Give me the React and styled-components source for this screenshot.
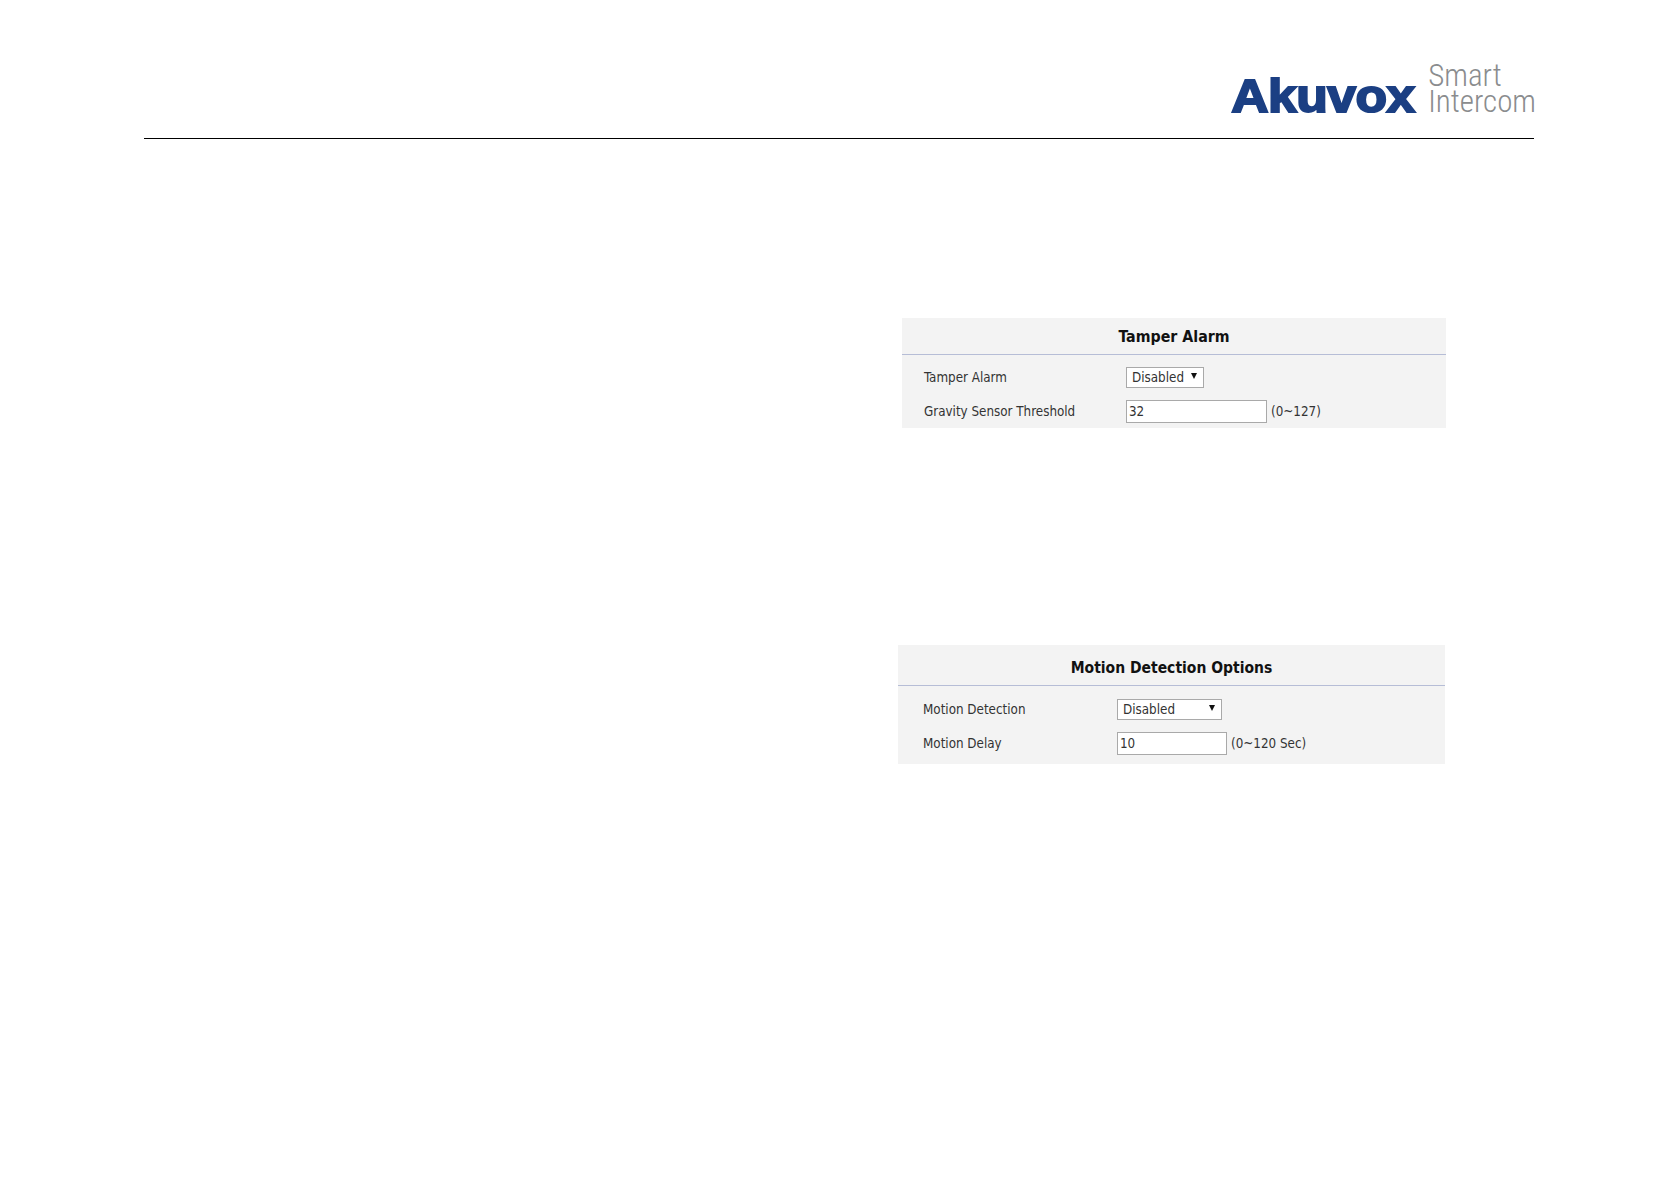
import styled, { createGlobalStyle } from "styled-components";

const GlobalStyle = createGlobalStyle`
  html, body {
    margin: 0;
    padding: 0;
    background: #fff;
  }
  body {
    font-family: "DejaVu Sans", "Liberation Sans", sans-serif;
    font-stretch: condensed;
  }
`;

const Page = styled.div`
  width: 1678px;
  height: 1185px;
  overflow: hidden;
  padding: 60px 0 0 144px;
  box-sizing: border-box;
`;
const Header = styled.header`
  width: 1390px;
  height: 78px;
  border-bottom: 1px solid #000;
  display: flex;
  justify-content: flex-end;
  align-items: flex-start;
  gap: 13px;
`;
const Brand = styled.div`
  margin-top: 10px;
  color: #1b3f83;
  font-family: "Liberation Sans", sans-serif;
  font-size: 47px;
  line-height: 52px;
  font-weight: 700;
  -webkit-text-stroke: 2px #1b3f83;
  transform: scaleX(1.1);
  transform-origin: right center;
  letter-spacing: -0.5px;
`;
const Tagline = styled.div`
  margin-right: -2px;
  margin-top: 3px;
  color: #8a8c8e;
  font-family: "Roboto", sans-serif;
  font-weight: 300;
  font-size: 31px;
`;
const TagLine = styled.div`
  height: 26px;
  line-height: 26px;
`;
const Panels = styled.main`
  display: flex;
  flex-direction: column;
`;
const Panel = styled.section`
  background: #f3f3f3;
  color: #333;
  font-size: 13.3px;
  box-sizing: border-box;
  margin-left: ${(p) => p.$left}px;
  margin-top: ${(p) => p.$top}px;
  width: ${(p) => p.$width}px;
  height: ${(p) => p.$height}px;
`;
const Title = styled.h2`
  margin: 0;
  box-sizing: border-box;
  height: ${(p) => p.$height}px;
  padding-top: ${(p) => p.$shift}px;
  border-bottom: 1px solid #b6bdd6;
  display: flex;
  align-items: center;
  justify-content: center;
  color: #111;
  font-size: ${(p) => p.$size}px;
  font-weight: 700;
`;
const Rows = styled.div`
  display: flex;
  flex-direction: column;
  gap: 11px;
  padding: ${(p) => p.$pad}px 0 0 ${(p) => p.$indent}px;
`;
const Row = styled.div`
  display: flex;
  align-items: center;
  height: 23px;
`;
const Label = styled.span`
  width: ${(p) => p.$width}px;
  flex: none;
`;
const SelectBox = styled.div`
  width: ${(p) => p.$width}px;
  height: 21px;
  box-sizing: border-box;
  background: #fff;
  border: 1px solid #a9a9a9;
  display: flex;
  align-items: center;
  justify-content: space-between;
  padding: 0 6px 0 5px;
  color: #333;
`;
const Arrow = styled.span`
  width: 0;
  height: 0;
  margin-bottom: 3px;
  border-left: 3px solid transparent;
  border-right: 3px solid transparent;
  border-top: 6px solid #111;
`;
const Input = styled.div`
  width: ${(p) => p.$width}px;
  height: 23px;
  box-sizing: border-box;
  background: #fff;
  border: 1px solid #a9a9a9;
  display: flex;
  align-items: center;
  padding-left: 2px;
`;
const Hint = styled.span`
  margin-left: 4px;
`;

export default function App() {
  return (
    <Page>
      <GlobalStyle />
      <Header>
        <Brand>Akuvox</Brand>
        <Tagline>
          <TagLine>Smart</TagLine>
          <TagLine>Intercom</TagLine>
        </Tagline>
      </Header>
      <Panels>
        <Panel $left={758} $top={179} $width={544} $height={110}>
          <Title $height={37} $shift={0} $size={15.8}>Tamper Alarm</Title>
          <Rows $pad={11} $indent={22}>
            <Row>
              <Label $width={202}>Tamper Alarm</Label>
              <SelectBox $width={78}>
                Disabled <Arrow />
              </SelectBox>
            </Row>
            <Row>
              <Label $width={202}>Gravity Sensor Threshold</Label>
              <Input $width={141}>32</Input>
              <Hint>(0~127)</Hint>
            </Row>
          </Rows>
        </Panel>
        <Panel $left={754} $top={217} $width={547} $height={119}>
          <Title $height={41} $shift={6} $size={15.5}>Motion Detection Options</Title>
          <Rows $pad={12} $indent={25}>
            <Row>
              <Label $width={194}>Motion Detection</Label>
              <SelectBox $width={105}>
                Disabled <Arrow />
              </SelectBox>
            </Row>
            <Row>
              <Label $width={194}>Motion Delay</Label>
              <Input $width={110}>10</Input>
              <Hint>(0~120 Sec)</Hint>
            </Row>
          </Rows>
        </Panel>
      </Panels>
    </Page>
  );
}
